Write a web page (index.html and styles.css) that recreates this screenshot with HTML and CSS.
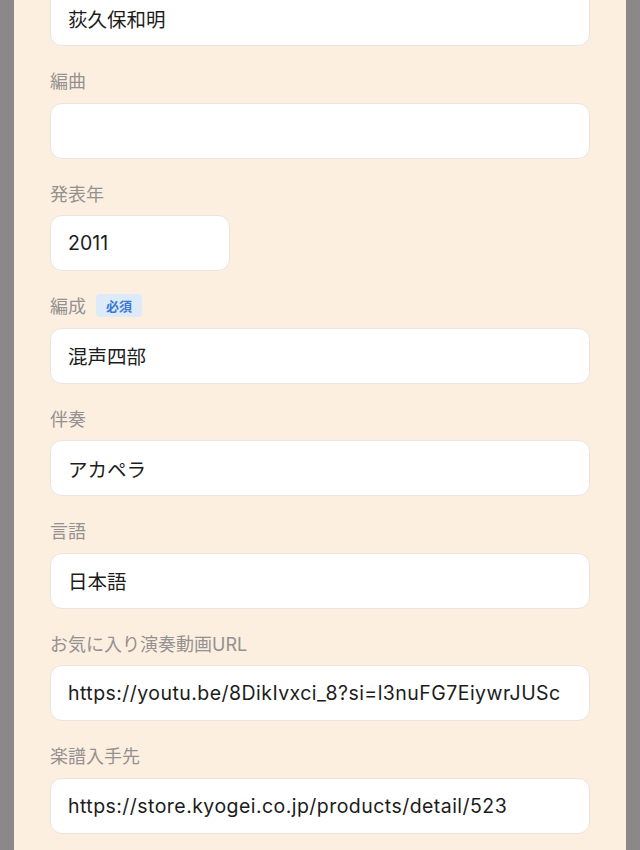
FILE: index.html
```html
<!DOCTYPE html>
<html lang="ja">
<head>
<meta charset="utf-8">
<link rel="stylesheet" href="styles.css">
</head>
<body>
<div class="page">
  <div class="panel">
    <form class="form">
      <div class="field">
        <div class="input">荻久保和明</div>
      </div>
      <div class="field">
        <div class="label">編曲</div>
        <div class="input"></div>
      </div>
      <div class="field">
        <div class="label">発表年</div>
        <div class="input short">2011</div>
      </div>
      <div class="field">
        <div class="label">編成 <span class="badge">必須</span></div>
        <div class="input">混声四部</div>
      </div>
      <div class="field">
        <div class="label">伴奏</div>
        <div class="input">アカペラ</div>
      </div>
      <div class="field">
        <div class="label">言語</div>
        <div class="input">日本語</div>
      </div>
      <div class="field">
        <div class="label">お気に入り演奏動画URL</div>
        <div class="input latin">https://youtu.be/8DikIvxci_8?si=l3nuFG7EiywrJUSc</div>
      </div>
      <div class="field">
        <div class="label">楽譜入手先</div>
        <div class="input latin">https://store.kyogei.co.jp/products/detail/523</div>
      </div>
    </form>
  </div>
</div>
</body>
</html>
```

FILE: styles.css
```css
html, body {
  margin: 0;
  padding: 0;
  height: 100%;
  overflow: hidden;
}
body {
  background: #8a8889;
  font-family: "Inter", "Noto Sans CJK JP", sans-serif;
}
.page {
  height: 100%;
  padding: 0 14px 0 14px;
}
.panel {
  background: #fcefe0;
  height: 100%;
  padding: 0 36px;
  overflow: hidden;
}
.form {
  display: flex;
  flex-direction: column;
  gap: 24px;
  margin-top: -10px;
}
.field {
  display: flex;
  flex-direction: column;
}
.label {
  display: flex;
  align-items: center;
  gap: 10px;
  height: 20px;
  margin-bottom: 12.5px;
  font-size: 18px;
  color: #949191;
}
.badge {
  display: inline-flex;
  align-items: center;
  height: 23px;
  padding: 0 10px;
  border-radius: 4px;
  background: #ddeaf9;
  color: #3a78d2;
  font-size: 13px;
  font-weight: bold;
}
.input {
  box-sizing: border-box;
  height: 56px;
  background: #ffffff;
  border: 1.5px solid #e9e4e0;
  border-radius: 12px;
  padding: 0 17px;
  display: flex;
  align-items: center;
  font-size: 19.5px;
  color: #1c1c1c;
  white-space: nowrap;
  overflow: hidden;
}
.input.latin {
  letter-spacing: 0.45px;
}
.input.short {
  width: 180px;
}
```
